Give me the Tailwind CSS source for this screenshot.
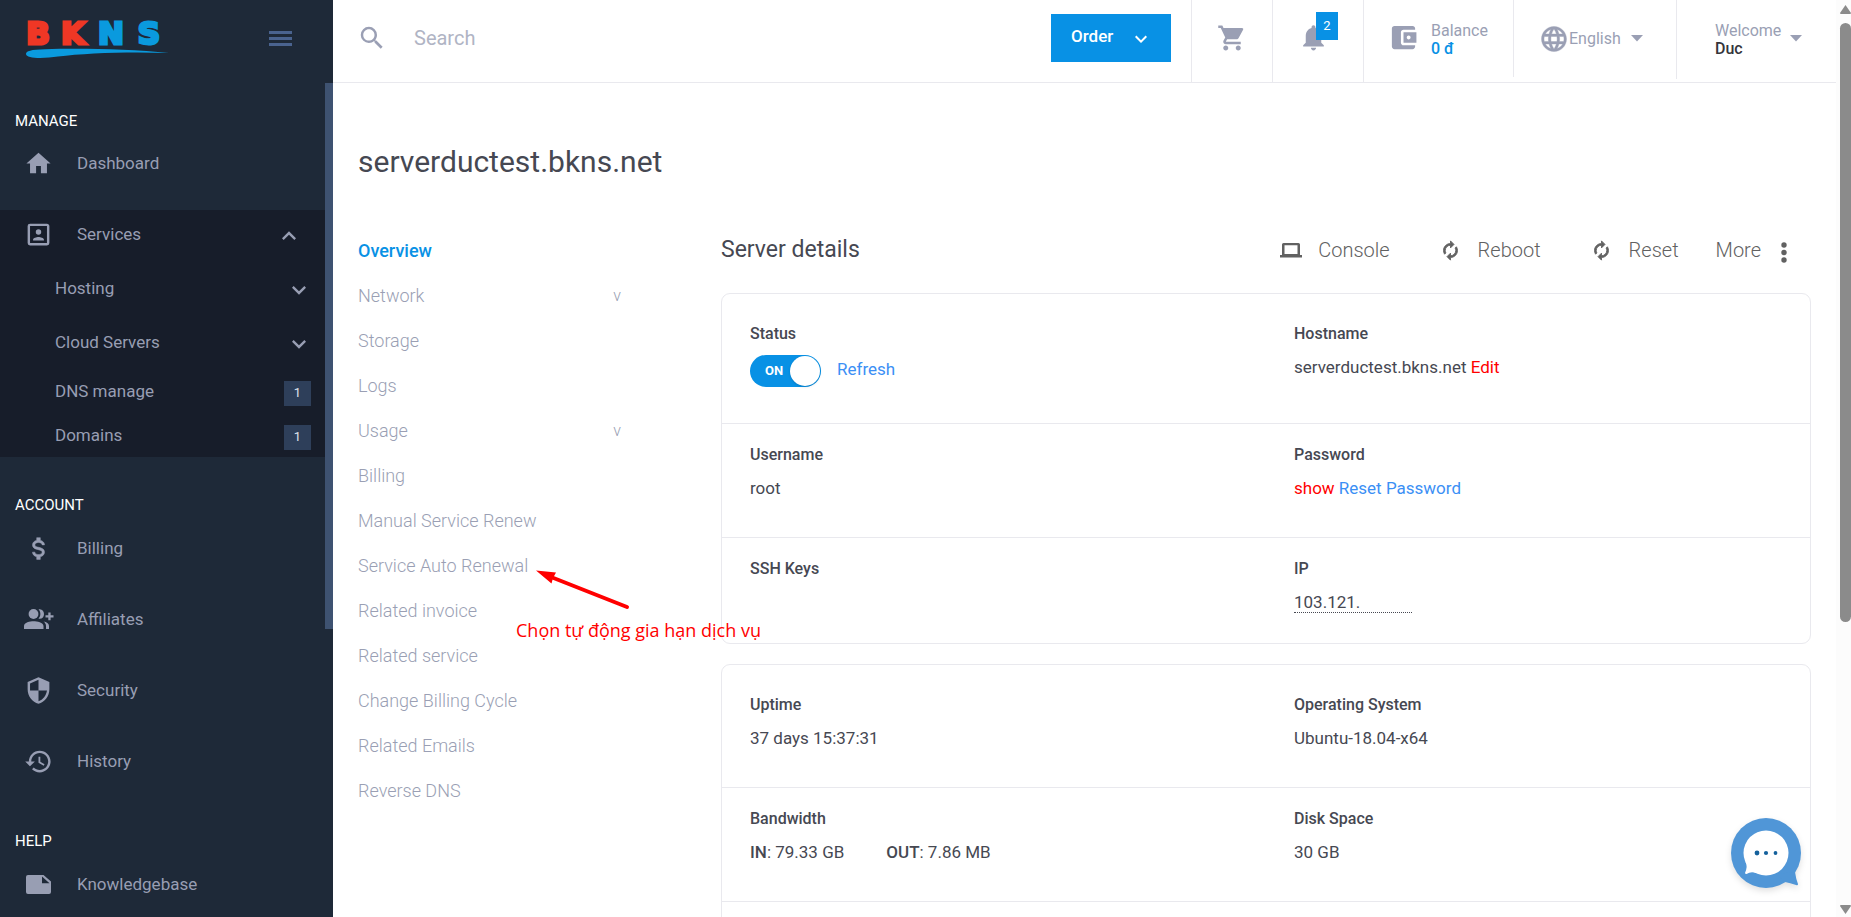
<!DOCTYPE html>
<html lang="en">
<head>
<meta charset="utf-8">
<meta name="viewport" content="width=device-width, initial-scale=1">
<title>serverductest.bkns.net</title>
<script src="https://cdn.jsdelivr.net/npm/@tailwindcss/browser@4"></script>
</head>
<body class="relative flex h-screen overflow-hidden bg-white font-[Roboto,sans-serif] text-[17px] leading-5 text-[#464852]">

<!-- Sidebar -->
<aside class="relative w-[333px] shrink-0 overflow-hidden bg-[#1e2938] text-[#989eb3]">
  <div class="flex h-[83px] items-start justify-between pl-5 pr-[41px]">
    <a href="#" aria-label="BKNS" class="mt-1">
      <svg class="h-[60px] w-[152px] overflow-visible" viewBox="20 4 152 60" role="img" aria-label="BKNS">
        <g font-family="DejaVu Sans" font-weight="bold" font-size="31" stroke-width="3" text-anchor="middle">
          <text x="38" y="44" fill="#ef3725" stroke="#ef3725">B</text>
          <text x="73" y="44" fill="#ef3725" stroke="#ef3725">K</text>
          <text x="111" y="44" fill="#0a9ade" stroke="#0a9ade">N</text>
          <text x="149" y="44" fill="#0a9ade" stroke="#0a9ade">S</text>
        </g>
        <path d="M26 54C26 51 31 49.500 45 49.200C80 48 130 49 169 53C130 51.500 85 53 58 56.500C45 58.500 26 59 26 54Z" fill="#0a9ade"/>
      </svg>
    </a>
    <button type="button" aria-label="Toggle menu" class="mt-[31px] flex w-[23px] flex-col gap-[3px]">
      <span class="h-[3px] bg-[#4a638f]"></span><span class="h-[3px] bg-[#4a638f]"></span><span class="h-[3px] bg-[#4a638f]"></span>
    </button>
  </div>
  <nav class="mr-2">
    <h2 class="mt-7 px-[15px] text-[15px] text-white">MANAGE</h2>
    <a href="#" class="mt-2 flex h-12 items-center gap-6 pl-6">
      <svg class="size-[29px]" viewBox="0 0 24 24" fill="currentColor"><path d="M10,20V14H14V20H19V12H22L12,3L2,12H5V20H10Z"/></svg>Dashboard</a>
    <div class="mt-[23px] bg-[#171d2a]">
      <a href="#" class="flex h-12 items-center gap-6 pl-6 pr-[22px]">
        <svg class="size-[29px]" viewBox="0 0 24 24" fill="currentColor"><path d="M19,19H5V5H19M19,3H5A2,2 0 0,0 3,5V19A2,2 0 0,0 5,21H19A2,2 0 0,0 21,19V5C21,3.89 20.1,3 19,3M16.500,16.250C16.500,14.750 13.500,14 12,14C10.500,14 7.500,14.750 7.500,16.250V17H16.500M12,12.250A2.250,2.250 0 0,0 14.250,10A2.250,2.250 0 0,0 12,7.750A2.250,2.250 0 0,0 9.750,10A2.250,2.250 0 0,0 12,12.250Z"/></svg><span class="flex-1">Services</span>
        <svg class="mt-1 size-7" viewBox="0 0 24 24" fill="currentColor"><path d="M7.410,15.410L12,10.830L16.590,15.410L18,14L12,8L6,14Z"/></svg></a>
      <div class="pt-[3px]">
        <a href="#" class="flex h-[54px] items-center justify-between pl-[55px] pr-3">Hosting
          <svg class="mt-1 size-7" viewBox="0 0 24 24" fill="currentColor"><path d="M7.410,8.580L12,13.170L16.590,8.580L18,10L12,16L6,10Z"/></svg></a>
        <a href="#" class="flex h-[54px] items-center justify-between pl-[55px] pr-3">Cloud Servers
          <svg class="mt-1 size-7" viewBox="0 0 24 24" fill="currentColor"><path d="M7.410,8.580L12,13.170L16.590,8.580L18,10L12,16L6,10Z"/></svg></a>
        <a href="#" class="flex h-11 items-center justify-between pl-[55px] pr-3.5">DNS manage
          <span class="mt-1 flex h-[25px] w-[27px] items-center justify-center bg-[#2e3f5a] text-[13px] text-[#dfe3ec]">1</span></a>
        <a href="#" class="flex h-11 items-center justify-between pl-[55px] pr-3.5">Domains
          <span class="mt-1 flex h-[25px] w-[27px] items-center justify-center bg-[#2e3f5a] text-[13px] text-[#dfe3ec]">1</span></a>
      </div>
    </div>
    <h2 class="mt-[38px] px-[15px] text-[15px] text-white">ACCOUNT</h2>
    <div class="mt-[9px] flex flex-col gap-[23px]">
      <a href="#" class="flex h-12 items-center gap-6 pl-6">
        <svg class="size-[29px]" viewBox="0 0 24 24" fill="currentColor" stroke="currentColor" stroke-width=".4"><path d="M7,15H9C9,16.080 10.370,17 12,17C13.630,17 15,16.080 15,15C15,13.900 13.960,13.500 11.760,12.970C9.640,12.440 7,11.780 7,9C7,7.210 8.470,5.690 10.500,5.180V3H13.500V5.180C15.530,5.690 17,7.210 17,9H15C15,7.920 13.630,7 12,7C10.370,7 9,7.920 9,9C9,10.100 10.040,10.500 12.240,11.030C14.360,11.560 17,12.220 17,15C17,16.790 15.530,18.310 13.500,18.820V21H10.500V18.820C8.470,18.310 7,16.790 7,15Z"/></svg>Billing</a>
      <a href="#" class="flex h-12 items-center gap-6 pl-6">
        <svg class="h-5 w-[29px] overflow-visible" viewBox="0 0 29 20" fill="currentColor"><circle cx="9.500" cy="5" r="4.900"/><path d="M0 20V17C0 13.500 6 12.300 9.500 12.300S19.500 13.500 19.500 17V20ZM14.500 .3C18 -.5 20 2 20 5S18 10.300 14.500 9.700C17 7 17 3 14.500 .3ZM19.500 12.500C22.500 13 25 14.500 25 17V20H22V17C22 15 21 13.500 19.500 12.500ZM24.300 3.500H26.600V6.300H29.500V8.500H26.600V11.300H24.300V8.500H21.500V6.300H24.300Z"/></svg>Affiliates</a>
      <a href="#" class="flex h-12 items-center gap-6 pl-6">
        <svg class="size-[29px]" viewBox="0 0 24 24" fill="currentColor"><path d="M12,12H19C18.470,16.110 15.720,19.780 12,20.920V12H5V6.300L12,3.190M12,1L3,5V11C3,16.550 6.840,21.730 12,23C17.160,21.730 21,16.550 21,11V5L12,1Z"/></svg>Security</a>
      <a href="#" class="flex h-12 items-center gap-6 pl-6">
        <svg class="size-[29px]" viewBox="0 0 24 24" fill="currentColor"><path d="M13 3c-4.970 0-9 4.030-9 9H1l3.890 3.890.070.140L9 12H6c0-3.870 3.130-7 7-7s7 3.130 7 7-3.130 7-7 7c-1.930 0-3.680-.79-4.940-2.060l-1.420 1.420C8.270 19.990 10.510 21 13 21c4.970 0 9-4.030 9-9s-4.030-9-9-9zm-1 5v5l4.280 2.540.72-1.210-3.500-2.080V8H12z"/></svg>History</a>
    </div>
    <h2 class="mt-[46px] px-[15px] text-[15px] text-white">HELP</h2>
    <a href="#" class="mt-[9px] flex h-12 items-center gap-6 pl-6">
      <svg class="h-[19px] w-[29px]" viewBox="-2 0 29 19" fill="currentColor"><path fill-rule="evenodd" d="M2 0H17.500L25 6.500V17A2 2 0 0 1 23 19H2A2 2 0 0 1 0 17V2A2 2 0 0 1 2 0ZM16 1.500V8.200H23.500Z"/></svg>Knowledgebase</a>
  </nav>
  <div class="absolute right-0 top-[83px] h-[546px] w-2 bg-[#3e5271]"></div>
</aside>

<!-- Page -->
<div class="flex min-w-0 flex-1 flex-col">
  <header class="flex h-[83px] shrink-0 border-b border-[#e9e9ee] text-base leading-[18px] text-[#9a9fb4]">
    <label class="flex h-[76px] flex-1 items-center gap-[27px] pl-6">
      <svg class="size-[30px] shrink-0" viewBox="0 0 24 24" fill="currentColor"><path d="M9.500,3A6.500,6.500 0 0,1 16,9.500C16,11.110 15.410,12.590 14.440,13.730L14.710,14H15.500L20.500,19L19,20.500L14,15.500V14.710L13.730,14.440C12.590,15.410 11.110,16 9.500,16A6.500,6.500 0 0,1 3,9.500A6.500,6.500 0 0,1 9.500,3M9.500,5C7,5 5,7 5,9.500C5,12 7,14 9.500,14C12,14 14,12 14,9.500C14,7 12,5 9.500,5Z"/></svg>
      <input type="search" placeholder="Search" aria-label="Search" class="w-full min-w-0 text-xl outline-none placeholder:text-[#b0b4c4]">
    </label>
    <button type="button" class="mr-5 mt-3.5 flex h-12 w-[120px] items-center gap-4 bg-[#0891e5] pb-1 pl-5 text-[17px] font-medium text-white">Order
      <svg class="mt-1.5 size-6" viewBox="0 0 24 24" fill="currentColor"><path d="M7.410,8.580L12,13.170L16.590,8.580L18,10L12,16L6,10Z"/></svg></button>
    <a href="#" aria-label="Cart" class="flex w-[81px] justify-center border-l border-[#e9e9ee] pt-[23px]">
      <svg class="size-[30px]" viewBox="0 0 24 24" fill="currentColor"><path d="M7 18c-1.100 0-1.990.9-1.990 2S5.900 22 7 22s2-.9 2-2-.9-2-2-2zM1 2v2h2l3.600 7.590-1.350 2.450c-.16.28-.25.61-.25.96 0 1.100.9 2 2 2h12v-2H7.420c-.14 0-.25-.11-.25-.25l.03-.12.9-1.630h7.450c.75 0 1.410-.41 1.750-1.030l3.580-6.490A1.003 1.003 0 0 0 20 4H5.210l-.94-2H1zm16 16c-1.100 0-1.990.9-1.990 2s.89 2 1.990 2 2-.9 2-2-.9-2-2-2z"/></svg></a>
    <a href="#" aria-label="Notifications" class="relative w-[91px] border-l border-[#e9e9ee] pl-[25px] pt-[22px]">
      <svg class="size-[31px]" viewBox="0 0 24 24" fill="currentColor"><path d="M12 22c1.100 0 2-.9 2-2h-4c0 1.100.89 2 2 2zm6-6v-5c0-3.070-1.640-5.640-4.500-6.320V4c0-.83-.67-1.500-1.500-1.500s-1.500.67-1.500 1.500v.68C7.630 5.360 6 7.920 6 11v5l-2 2v1h16v-1l-2-2z"/></svg>
      <span class="absolute left-[43px] top-3 flex h-7 w-[22px] items-center justify-center bg-[#0891e5] text-[13px] text-white">2</span></a>
    <a href="#" class="flex w-[150px] items-start gap-3 border-l border-[#e9e9ee] pl-6 pt-[22px]">
      <svg class="size-[31px]" viewBox="0 0 24 24" fill="currentColor"><path d="M21 18v1c0 1.100-.9 2-2 2H5c-1.110 0-2-.9-2-2V5c0-1.100.89-2 2-2h14c1.100 0 2 .9 2 2v1h-9c-1.110 0-2 .9-2 2v8c0 1.100.89 2 2 2h9zm-9-2h10V8H12v8zm4-2.500c-.83 0-1.500-.67-1.500-1.500s.67-1.500 1.500-1.500 1.500.67 1.500 1.500-.67 1.500-1.500 1.500z"/></svg>
      <span>Balance<strong class="block font-medium text-[#0891e5]">0 đ</strong></span></a>
    <button type="button" class="flex h-[77px] w-[163px] items-center border-l border-[#e9e9ee] pl-[25px]">
      <svg class="size-[30px]" viewBox="0 0 24 24" fill="currentColor" stroke="currentColor" stroke-width=".3"><path d="M11.990 2C6.470 2 2 6.480 2 12s4.470 10 9.990 10C17.520 22 22 17.520 22 12S17.520 2 11.990 2zm6.930 6h-2.950c-.32-1.250-.78-2.450-1.380-3.560 1.840.63 3.370 1.910 4.330 3.560zM12 4.040c.83 1.200 1.480 2.530 1.910 3.960h-3.820c.43-1.430 1.080-2.760 1.910-3.960zM4.260 14C4.100 13.360 4 12.690 4 12s.1-1.360.26-2h3.380c-.08.66-.14 1.320-.14 2 0 .68.06 1.340.14 2H4.260zm.82 2h2.950c.32 1.250.78 2.450 1.380 3.560-1.840-.63-3.370-1.900-4.330-3.560zm2.950-8H5.080c.96-1.660 2.490-2.930 4.330-3.560C8.810 5.550 8.350 6.750 8.030 8zM12 19.960c-.83-1.200-1.480-2.530-1.910-3.960h3.820c-.43 1.430-1.080 2.760-1.910 3.960zM14.340 14H9.660c-.09-.66-.16-1.320-.16-2 0-.68.07-1.350.16-2h4.680c.09.65.16 1.320.16 2 0 .68-.07 1.340-.16 2zm.25 5.560c.6-1.110 1.060-2.310 1.380-3.560h2.950c-.96 1.650-2.490 2.930-4.330 3.560zM16.360 14c.08-.66.14-1.320.14-2 0-.68-.06-1.340-.14-2h3.380c.16.64.26 1.310.26 2s-.1 1.360-.26 2h-3.380z"/></svg>
      <span>English</span>
      <svg class="ml-2.5 h-[7px] w-3" viewBox="0 0 12 7" fill="currentColor"><path d="M0 0H12L6 6.500Z"/></svg></button>
    <button type="button" class="flex h-[79px] w-[160px] items-center border-l border-[#e9e9ee] pl-[38px] text-left">
      <span>Welcome<strong class="block font-medium text-[#35353b]">Duc</strong></span>
      <svg class="mb-0.5 ml-[9px] h-[7px] w-3" viewBox="0 0 12 7" fill="currentColor"><path d="M0 0H12L6 6.500Z"/></svg></button>
  </header>

  <main class="min-h-0 flex-1 overflow-hidden pl-[25px] pr-[25px] pt-[59px]">
    <h1 class="text-[30px] leading-10">serverductest.bkns.net</h1>
    <div class="mt-[46px] flex">
      <nav class="mr-[100px] flex w-[263px] shrink-0 flex-col text-lg font-light text-[#9a9fb4]">
        <a href="#" class="flex h-[45px] items-center font-medium text-[#0891e5]">Overview</a>
        <a href="#" class="flex h-[45px] items-center justify-between">Network <span class="text-base">v</span></a>
        <a href="#" class="flex h-[45px] items-center">Storage</a>
        <a href="#" class="flex h-[45px] items-center">Logs</a>
        <a href="#" class="flex h-[45px] items-center justify-between">Usage <span class="text-base">v</span></a>
        <a href="#" class="flex h-[45px] items-center">Billing</a>
        <a href="#" class="flex h-[45px] items-center">Manual Service Renew</a>
        <a href="#" class="flex h-[45px] items-center">Service Auto Renewal</a>
        <a href="#" class="flex h-[45px] items-center">Related invoice</a>
        <a href="#" class="flex h-[45px] items-center">Related service</a>
        <a href="#" class="flex h-[45px] items-center">Change Billing Cycle</a>
        <a href="#" class="flex h-[45px] items-center">Related Emails</a>
        <a href="#" class="flex h-[45px] items-center">Reverse DNS</a>
      </nav>

      <section class="min-w-0 flex-1">
        <div class="flex h-11 items-center justify-between">
          <h2 class="text-[23px]">Server details</h2>
          <div class="flex items-center pr-6 text-xl font-light text-[#616161]">
            <button type="button" class="mr-[50px] flex items-center gap-4">
              <svg class="h-[15px] w-[22px]" viewBox="0 0 22 15" fill="currentColor"><path fill-rule="evenodd" d="M3.500 0H18.500A1.500 1.500 0 0 1 20 1.500V12H22V14.500H0V12H2V1.500A1.500 1.500 0 0 1 3.500 0ZM4.500 2.300V11H17.500V2.300Z"/></svg>Console</button>
            <button type="button" class="mr-[50px] flex items-center gap-[17px]">
              <svg class="size-[21px]" viewBox="0 0 24 24" fill="currentColor" stroke="currentColor"><path d="M12 6v3l4-4-4-4v3c-4.420 0-8 3.580-8 8 0 1.570.46 3.030 1.240 4.260L6.700 14.800c-.45-.83-.7-1.790-.7-2.800 0-3.310 2.690-6 6-6zm6.760 1.740L17.300 9.200c.44.84.7 1.790.7 2.800 0 3.310-2.690 6-6 6v-3l-4 4 4 4v-3c4.420 0 8-3.580 8-8 0-1.570-.46-3.030-1.240-4.260z"/></svg>Reboot</button>
            <button type="button" class="mr-[37px] flex items-center gap-[17px]">
              <svg class="size-[21px]" viewBox="0 0 24 24" fill="currentColor" stroke="currentColor"><path d="M12 6v3l4-4-4-4v3c-4.420 0-8 3.580-8 8 0 1.570.46 3.030 1.240 4.260L6.700 14.800c-.45-.83-.7-1.790-.7-2.800 0-3.310 2.690-6 6-6zm6.760 1.740L17.300 9.200c.44.84.7 1.790.7 2.800 0 3.310-2.690 6-6 6v-3l-4 4 4 4v-3c4.420 0 8-3.580 8-8 0-1.570-.46-3.030-1.240-4.260z"/></svg>Reset</button>
            <button type="button" class="flex items-center gap-5">More
              <svg class="mt-1 h-[21px] w-1.5" viewBox="0 0 6 21" fill="currentColor"><circle cx="3" cy="3" r="2.700"/><circle cx="3" cy="10.500" r="2.700"/><circle cx="3" cy="18" r="2.700"/></svg></button>
          </div>
        </div>

        <div class="mt-[21px] rounded-[9px] border border-[#e9e9ee]">
          <div class="grid grid-cols-2 border-b border-[#e9e9ee] pb-9 pt-[30px]">
            <div class="pl-7">
              <h3 class="text-base leading-5 font-medium">Status</h3>
              <div class="mt-[11px] flex h-8 items-center gap-4">
                <label class="relative flex h-8 w-[71px] items-center rounded-full bg-[#0891e5] pl-[15px] text-[13px] font-bold text-white">
                  <input type="checkbox" checked aria-label="Server power" class="absolute inset-0 size-full cursor-pointer appearance-none">ON
                  <span class="absolute right-px top-px size-[30px] rounded-full bg-white shadow"></span>
                </label>
                <a href="#" class="pb-1 text-[#3b8ff5]">Refresh</a>
              </div>
            </div>
            <div class="pl-7">
              <h3 class="text-base leading-5 font-medium">Hostname</h3>
              <p class="mt-[13px]">serverductest.bkns.net <a href="#" class="text-[#f00]">Edit</a></p>
            </div>
          </div>
          <div class="grid grid-cols-2 border-b border-[#e9e9ee] pb-[39px] pt-[21px]">
            <div class="pl-7"><h3 class="text-base leading-5 font-medium">Username</h3><p class="mt-[13px]">root</p></div>
            <div class="pl-7"><h3 class="text-base leading-5 font-medium">Password</h3>
              <p class="mt-[13px]"><a href="#" class="text-[#f00]">show</a> <a href="#" class="text-[#3b8ff5]">Reset Password</a></p></div>
          </div>
          <div class="grid grid-cols-2 pb-[30px] pt-[21px]">
            <div class="pl-7"><h3 class="text-base leading-5 font-medium">SSH Keys</h3></div>
            <div class="pl-7"><h3 class="text-base leading-5 font-medium">IP</h3>
              <p class="mt-[13px] w-[118px] border-b border-dotted border-[#464852]">103.121.</p></div>
          </div>
        </div>

        <div class="mt-5 rounded-[9px] border border-[#e9e9ee]">
          <div class="grid grid-cols-2 border-b border-[#e9e9ee] pb-[39px] pt-[30px]">
            <div class="pl-7"><h3 class="text-base leading-5 font-medium">Uptime</h3><p class="mt-[13px]">37 days 15:37:31</p></div>
            <div class="pl-7"><h3 class="text-base leading-5 font-medium">Operating System</h3><p class="mt-[13px]">Ubuntu-18.04-x64</p></div>
          </div>
          <div class="grid grid-cols-2 border-b border-[#e9e9ee] pb-[39px] pt-[21px]">
            <div class="pl-7"><h3 class="text-base leading-5 font-medium">Bandwidth</h3>
              <p class="mt-[13px] flex gap-[42px]"><span><strong class="font-medium">IN</strong>: 79.33 GB</span><span><strong class="font-medium">OUT</strong>: 7.86 MB</span></p></div>
            <div class="pl-7"><h3 class="text-base leading-5 font-medium">Disk Space</h3><p class="mt-[13px]">30 GB</p></div>
          </div>
          <div class="h-24"></div>
        </div>
      </section>
    </div>
  </main>
</div>

<!-- Page scroll track -->
<div class="flex w-[15px] shrink-0 flex-col items-end bg-[#fcfcfc] pb-[3px] pt-[5px]" aria-hidden="true">
  <svg class="h-[9px] w-[11px]" viewBox="0 0 11 9" fill="#8b8b8b"><path d="M5.500 0L11 8Q11 9 10 9H1Q0 9 0 8Z"/></svg>
  <div class="mt-[9px] h-[599px] w-[11px] rounded-full bg-[#8b8b8b]"></div>
  <svg class="mt-auto h-[9px] w-[11px]" viewBox="0 0 11 9" fill="#8b8b8b"><path d="M5.500 9L11 1Q11 0 10 0H1Q0 0 0 1Z"/></svg>
</div>

<!-- Callout -->
<svg class="absolute left-[536px] top-[570px] h-10 w-24" viewBox="0 0 96 40" aria-hidden="true"><path d="M15 7L91 37" stroke="#f00" stroke-width="4" stroke-linecap="round"/><path d="M0 .5L20 2.500L17 8L15.500 13.500Z" fill="#f00"/></svg>
<p class="absolute left-[516px] top-[618px] whitespace-nowrap font-['Open_Sans',sans-serif] text-lg leading-6 text-[#f00]">Chọn tự động gia hạn dịch vụ</p>

<!-- Chat launcher -->
<button type="button" aria-label="Open chat" class="absolute bottom-[23px] right-[45px] size-20">
  <svg class="size-20 overflow-visible drop-shadow-md" viewBox="0 0 80 80"><circle cx="40" cy="39" r="35" fill="#5096d7"/><path d="M69 58Q70 65 72 70Q72 72 70 71Q64 69 59 68L50 60Z" fill="#5096d7"/><circle cx="40" cy="39" r="22.500" fill="#fff"/><path d="M19.500 48Q22 52 19 59Q19 60 20.500 60Q25 57 30 59L34 50Z" fill="#fff"/><g fill="#14619c"><circle cx="31" cy="39" r="2.400"/><circle cx="40" cy="39" r="2.100"/><circle cx="49.500" cy="39" r="1.900"/></g></svg>
</button>
</body>
</html>
